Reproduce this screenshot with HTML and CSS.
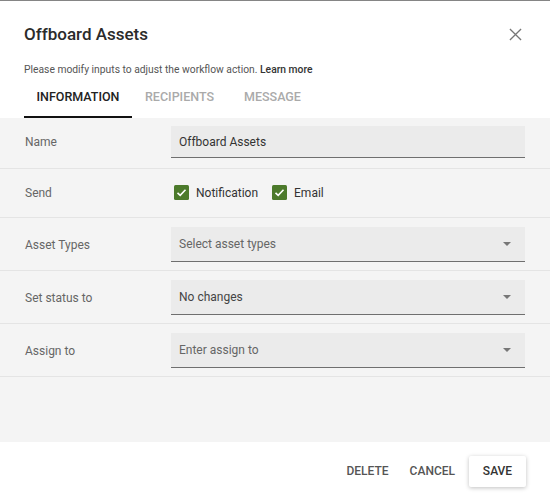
FILE: index.html
```html
<!DOCTYPE html>
<html lang="en">
<head>
    <meta charset="UTF-8">
    <title>Offboard Assets</title>
    <link rel="stylesheet" href="styles.css">
</head>
<body>
    <div class="dialog">
        <div class="header">
            <h1 class="title">Offboard Assets</h1>
            <svg class="close" viewBox="0 0 14 14" width="14" height="14">
                <path d="M1 1 L13 13 M13 1 L1 13" stroke="#777" stroke-width="1.4" fill="none"/>
            </svg>
        </div>
        <p class="hint">Please modify inputs to adjust the workflow action. <strong>Learn more</strong></p>
        <div class="tabs">
            <div class="tab active">INFORMATION</div>
            <div class="tab">RECIPIENTS</div>
            <div class="tab">MESSAGE</div>
        </div>
        <div class="content">
            <div class="row">
                <div class="label">Name</div>
                <div class="field text">Offboard Assets</div>
            </div>
            <div class="row send">
                <div class="label">Send</div>
                <div class="checks">
                    <span class="check">
                        <svg class="box" viewBox="0 0 15 15" width="15" height="15">
                            <rect width="15" height="15" rx="1.5" fill="#4c7a2b"/>
                            <path d="M3.5 7.8 L6.2 10.3 L11.5 4.8" stroke="#fff" stroke-width="1.6" fill="none"/>
                        </svg>
                        Notification
                    </span>
                    <span class="check">
                        <svg class="box" viewBox="0 0 15 15" width="15" height="15">
                            <rect width="15" height="15" rx="1.5" fill="#4c7a2b"/>
                            <path d="M3.5 7.8 L6.2 10.3 L11.5 4.8" stroke="#fff" stroke-width="1.6" fill="none"/>
                        </svg>
                        Email
                    </span>
                </div>
            </div>
            <div class="row">
                <div class="label">Asset Types</div>
                <div class="field select placeholder">Select asset types<span class="arrow"></span></div>
            </div>
            <div class="row">
                <div class="label">Set status to</div>
                <div class="field select dark">No changes<span class="arrow"></span></div>
            </div>
            <div class="row">
                <div class="label">Assign to</div>
                <div class="field select placeholder">Enter assign to<span class="arrow"></span></div>
            </div>
        </div>
        <div class="footer">
            <button class="btn">DELETE</button>
            <button class="btn">CANCEL</button>
            <button class="btn save">SAVE</button>
        </div>
    </div>
</body>
</html>
```

FILE: styles.css
```css
* {
    margin: 0;
    padding: 0;
    box-sizing: border-box;
    font-family: Roboto, 'Liberation Sans', sans-serif;
}
body {
    background: #fff;
}
.dialog {
    width: 550px;
    height: 500px;
    background: #fff;
    border-top: 1px solid #858585;
    display: flex;
    flex-direction: column;
}
.header {
    display: flex;
    justify-content: space-between;
    align-items: center;
    padding: 23px 28px 0 24px;
}
.title {
    font-size: 17px;
    font-weight: 500;
    color: #2b2b2b;
}
.close {
    width: 13px;
    height: 13px;
}
.hint {
    font-size: 10.3px;
    color: #555;
    padding: 19px 0 0 24px;
}
.hint strong {
    color: #333;
    font-weight: 500;
}
.tabs {
    display: flex;
    padding: 0 0 0 24px;
    margin-top: 7px;
}
.tab {
    font-size: 12.5px;
    font-weight: 500;
    color: #aaa;
    padding: 6px 0 12px;
    text-align: center;
}
.tab:nth-child(1) {
    width: 108px;
}
.tab:nth-child(2) {
    width: 90px;
    margin-left: 13px;
    text-align: left;
}
.tab:nth-child(3) {
    margin-left: 9px;
}
.tab.active {
    color: #222;
    border-bottom: 2px solid #111;
}
.content {
    background: #f4f4f4;
    flex: 1;
}
.row {
    display: flex;
    align-items: center;
    padding: 9px 25px 8px;
    border-bottom: 1px solid #e4e4e4;
}
.row:first-child {
    padding-top: 8px;
    padding-bottom: 10px;
}
.label {
    width: 146px;
    font-size: 12px;
    color: #666;
}
.field {
    flex: 1;
    height: 35px;
    background: #ebebeb;
    border-bottom: 1px solid #6f6f6f;
    display: flex;
    align-items: center;
    padding: 0 8px;
    font-size: 12px;
    color: #444;
}
.field.text {
    height: 32px;
    color: #333;
}
.field.placeholder {
    color: #666;
}
.field.dark {
    color: #444;
}
.arrow {
    margin-left: auto;
    margin-right: 6px;
    width: 0;
    height: 0;
    border-left: 4.5px solid transparent;
    border-right: 4.5px solid transparent;
    border-top: 4.5px solid #777;
}
.row.send {
    padding-top: 16px;
    padding-bottom: 17px;
}
.checks {
    display: flex;
    gap: 14px;
    padding-left: 3px;
}
.check {
    display: flex;
    align-items: center;
    gap: 7px;
    font-size: 12px;
    color: #333;
}
.box {
    display: block;
}
.footer {
    height: 58px;
    display: flex;
    justify-content: flex-end;
    align-items: center;
    padding: 0 24px 0 0;
    gap: 5px;
}
.btn {
    background: none;
    border: none;
    font-size: 12px;
    font-weight: 500;
    color: #555;
    padding: 9px 8px;
}
.btn.save {
    width: 57px;
    height: 31px;
    padding: 0;
    margin-left: 1px;
    background: #fff;
    color: #333;
    border-radius: 2px;
    box-shadow: 0 1px 4px rgba(0, 0, 0, 0.25);
}
```
